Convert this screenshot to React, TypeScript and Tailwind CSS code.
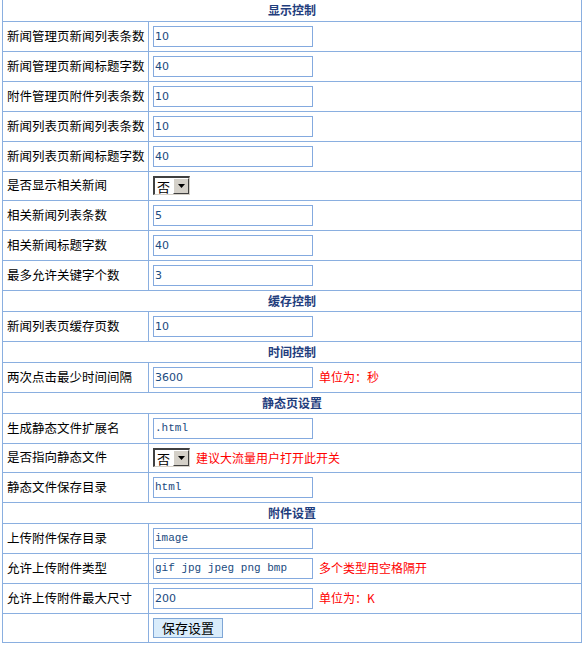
import React from 'react';

type Row =
  | { kind: 'head'; title: string }
  | { kind: 'text'; label: string; value: string; mono?: boolean; note?: string }
  | { kind: 'select'; label: string; value: string; note?: string }
  | { kind: 'submit' };

const rows: Row[] = [
  { kind: 'head', title: '显示控制' },
  { kind: 'text', label: '新闻管理页新闻列表条数', value: '10' },
  { kind: 'text', label: '新闻管理页新闻标题字数', value: '40' },
  { kind: 'text', label: '附件管理页附件列表条数', value: '10' },
  { kind: 'text', label: '新闻列表页新闻列表条数', value: '10' },
  { kind: 'text', label: '新闻列表页新闻标题字数', value: '40' },
  { kind: 'select', label: '是否显示相关新闻', value: '否' },
  { kind: 'text', label: '相关新闻列表条数', value: '5' },
  { kind: 'text', label: '相关新闻标题字数', value: '40' },
  { kind: 'text', label: '最多允许关键字个数', value: '3' },
  { kind: 'head', title: '缓存控制' },
  { kind: 'text', label: '新闻列表页缓存页数', value: '10' },
  { kind: 'head', title: '时间控制' },
  { kind: 'text', label: '两次点击最少时间间隔', value: '3600', note: '单位为：秒' },
  { kind: 'head', title: '静态页设置' },
  { kind: 'text', label: '生成静态文件扩展名', value: '.html', mono: true },
  { kind: 'select', label: '是否指向静态文件', value: '否', note: '建议大流量用户打开此开关' },
  { kind: 'text', label: '静态文件保存目录', value: 'html', mono: true },
  { kind: 'head', title: '附件设置' },
  { kind: 'text', label: '上传附件保存目录', value: 'image', mono: true },
  { kind: 'text', label: '允许上传附件类型', value: 'gif jpg jpeg png bmp', mono: true, note: '多个类型用空格隔开' },
  { kind: 'text', label: '允许上传附件最大尺寸', value: '200', note: '单位为：K' },
  { kind: 'submit' },
];

const cjk = "font-['SimSun','Noto_Sans_CJK_SC',sans-serif]";
const cell = 'border border-[#8aafe0]';

const Note = ({ text }: { text?: string }) =>
  text ? <span className="ml-[6px] text-[12px] text-[#ff0000]">{text}</span> : null;

// windows-classic style dropdown, drawn by hand
const FakeSelect = ({ value }: { value: string }) => (
  <span className="inline-flex h-[19px] w-[37px] items-stretch border-t-2 border-l-2 border-b border-r border-t-[#404040] border-l-[#404040] border-b-[#d4d0c8] border-r-[#d4d0c8] bg-white">
    <span className="flex flex-1 items-center pl-[2px] text-[13px] leading-none text-black">{value}</span>
    <span className="flex w-[16px] items-center justify-center border border-t-white border-l-white border-b-[#404040] border-r-[#404040] bg-[#d4d0c8]">
      <svg width="7" height="4" viewBox="0 0 7 4">
        <path d="M0 0h7L3.5 4z" fill="#000" />
      </svg>
    </span>
  </span>
);

export default function App() {
  return (
    <div className={`bg-white pl-[2px] ${cjk}`}>
      <table className="w-[580px] border-collapse border border-t-0 border-[#8aafe0] text-[12px] text-black">
        <tbody>
          {rows.map((r, i) => {
            if (r.kind === 'head') {
              return (
                <tr key={i} className="h-[21px]">
                  <td colSpan={2} className={`${cell} ${i === 0 ? 'border-t-0' : ''} text-center text-[12px] font-bold text-[#1f3d7d]`}>
                    {r.title}
                  </td>
                </tr>
              );
            }
            if (r.kind === 'submit') {
              return (
                <tr key={i} className="h-[29px]">
                  <td className={`${cell} w-[146px]`} />
                  <td className={`${cell} pl-[4px]`}>
                    <button className="h-[20px] w-[70px] border border-[#7fa6d6] bg-[#d9ecfb] text-[13px] leading-none text-black">
                      保存设置
                    </button>
                  </td>
                </tr>
              );
            }
            return (
              <tr key={i} className={r.kind === 'select' ? 'h-[29px]' : 'h-[30px]'}>
                <td className={`${cell} w-[146px] pl-[4px] text-[12.5px]`}>{r.label}</td>
                <td className={`${cell} pl-[4px]`}>
                  <div className="flex items-center">
                    {r.kind === 'select' ? (
                      <FakeSelect value={r.value} />
                    ) : (
                      <input
                        readOnly
                        value={r.value}
                        className={`h-[21px] w-[160px] border border-[#84aadf] bg-white px-[1px] text-[#1a4a80] outline-none ${
                          r.mono
                            ? "font-['Liberation_Mono',monospace] text-[11px]"
                            : "font-['DejaVu_Sans','Tahoma',sans-serif] text-[11px]"
                        }`}
                      />
                    )}
                    <Note text={r.note} />
                  </div>
                </td>
              </tr>
            );
          })}
        </tbody>
      </table>
    </div>
  );
}
